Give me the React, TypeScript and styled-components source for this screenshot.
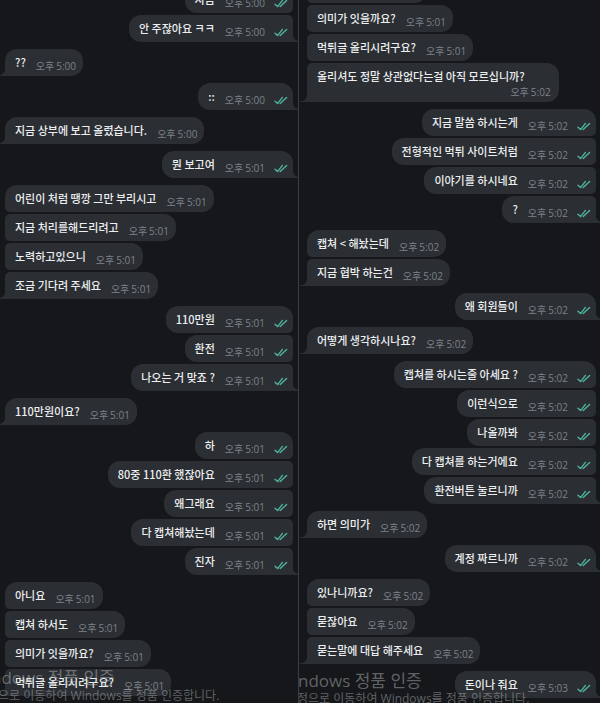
import React from 'react';
import styled, { createGlobalStyle } from 'styled-components';

type Msg = { text: string; time: string; stacked?: boolean };
type Group = { out: boolean; items: Msg[] };

const m = (time: string, ...texts: string[]): Msg[] => texts.map((text) => ({ text, time }));

const leftChat: Group[] = [
  { out: true, items: m('5:00', '지금', '안 주잖아요 ㅋㅋ') },
  { out: false, items: m('5:00', '??') },
  { out: true, items: m('5:00', '::') },
  { out: false, items: m('5:00', '지금 상부에 보고 올렸습니다.') },
  { out: true, items: m('5:01', '뭔 보고여') },
  {
    out: false,
    items: m('5:01', '어린이 처럼 땡깡 그만 부리시고', '지금 처리를해드리려고', '노력하고있으니', '조금 기다려 주세요'),
  },
  { out: true, items: m('5:01', '110만원', '환전', '나오는 거 맞죠 ?') },
  { out: false, items: m('5:01', '110만원이요?') },
  { out: true, items: m('5:01', '하', '80중 110환 했잖아요', '왜그래요', '다 캡쳐해놨는데', '진자') },
  { out: false, items: m('5:01', '아니요', '캡쳐 하서도', '의미가 잇을까요?', '먹튀글 올리시려구요?') },
];

const rightChat: Group[] = [
  {
    out: false,
    items: [
      ...m('5:01', '캡쳐 하서도', '의미가 잇을까요?', '먹튀글 올리시려구요?'),
      { text: '올리셔도 정말 상관없다는걸 아직 모르십니까?', time: '5:02', stacked: true },
    ],
  },
  { out: true, items: m('5:02', '지금 말씀 하시는게', '전형적인 먹튀 사이트처럼', '이야기를 하시네요', '?') },
  { out: false, items: m('5:02', '캡쳐 < 해놨는데', '지금 협박 하는건') },
  { out: true, items: m('5:02', '왜 회원들이') },
  { out: false, items: m('5:02', '어떻게 생각하시나요?') },
  {
    out: true,
    items: m('5:02', '캡쳐를 하시는줄 아세요 ?', '이런식으로', '나올까봐', '다 캡쳐를 하는거에요', '환전버튼 눌르니까'),
  },
  { out: false, items: m('5:02', '하면 의미가') },
  { out: true, items: m('5:02', '계정 짜르니까') },
  { out: false, items: m('5:02', '있나니까요?', '묻잖아요', '묻는말에 대답 해주세요') },
  { out: true, items: m('5:03', '돈이나 줘요') },
];

const BG = '#15171a';
const BUBBLE = '#2b2e33';

const GlobalStyle = createGlobalStyle`
  html, body {
    margin: 0;
    padding: 0;
    background: ${BG};
  }
  #root {
    height: 703px;
  }
`;

const Screen = styled.div`
  display: grid;
  grid-template-columns: 298px 1px 1fr;
  width: 600px;
  height: 703px;
  overflow: hidden;
  background: ${BG};
  font-family: 'Open Sans', 'Noto Sans CJK KR', sans-serif;
`;

const Divider = styled.div`
  background: #3a3d43;
`;

const Column = styled.div<{ $padL: number; $padR: number }>`
  position: relative;
  overflow: hidden;
  padding: 0 ${(p) => p.$padR}px 0 ${(p) => p.$padL}px;
`;

const List = styled.div<{ $shift: number }>`
  display: flex;
  flex-direction: column;
  gap: 7px;
  margin-top: ${(p) => -p.$shift}px;
`;

const GroupBox = styled.div<{ $out: boolean }>`
  display: flex;
  flex-direction: column;
  align-items: ${(p) => (p.$out ? 'flex-end' : 'flex-start')};
  gap: 2px;
`;

const Bubble = styled.div<{ $out: boolean; $first: boolean; $last: boolean; $stacked: boolean }>`
  position: relative;
  box-sizing: border-box;
  min-height: 27px;
  display: flex;
  flex-direction: ${(p) => (p.$stacked ? 'column' : 'row')};
  align-items: flex-end;
  padding: ${(p) => (p.$stacked ? '6px 8px 4px 10px' : `0 ${p.$out ? 5 : 7}px 4px 10px`)};
  background: ${BUBBLE};
  border-radius: ${(p) =>
    p.$out
      ? `12px ${p.$first ? 12 : 5}px ${p.$last ? 0 : 5}px 12px`
      : `${p.$first ? 12 : 5}px 12px 12px ${p.$last ? 0 : 5}px`};

  &::before {
    content: '';
    display: ${(p) => (p.$last ? 'block' : 'none')};
    position: absolute;
    bottom: 0;
    width: 7px;
    height: 8px;
    ${(p) =>
      p.$out
        ? `right: -7px; background: radial-gradient(circle at 100% 0, transparent 7px, ${BUBBLE} 7.6px);`
        : `left: -7px; background: radial-gradient(circle at 0 0, transparent 7px, ${BUBBLE} 7.6px);`}
  }
`;

const Text = styled.span<{ $stacked: boolean }>`
  align-self: ${(p) => (p.$stacked ? 'flex-start' : 'auto')};
  color: #eceef0;
  font-family: 'Noto Sans CJK KR', 'Open Sans', sans-serif;
  font-size: 11px;
  font-weight: 500;
  line-height: 15px;
  margin-bottom: 2px;
  margin-right: ${(p) => (p.$stacked ? 26 : 0)}px;
  white-space: nowrap;
`;

const Meta = styled.span<{ $stacked: boolean }>`
  display: flex;
  align-items: center;
  gap: 9px;
  margin-left: ${(p) => (p.$stacked ? 0 : 10)}px;
  color: #7d8289;
  font-size: 10px;
  line-height: 12px;
  white-space: nowrap;
`;

const Ampm = styled.span`
  font-family: 'Noto Sans CJK KR', sans-serif;
  margin-right: 2px;
`;

const Watermark = styled.div<{ $left: number; $bottom: number }>`
  position: absolute;
  left: ${(p) => p.$left}px;
  bottom: ${(p) => p.$bottom}px;
  color: rgba(205, 208, 212, 0.42);
  font-family: 'Open Sans', 'Noto Sans CJK KR', sans-serif;
  white-space: nowrap;
  pointer-events: none;
`;

const WmTitle = styled.div`
  font-size: 17px;
  line-height: 20px;
`;

const WmSub = styled.div<{ $indent: number }>`
  font-size: 12px;
  line-height: 15px;
  margin-left: ${(p) => p.$indent}px;
`;

function Checks() {
  return (
    <svg width="14" height="9" viewBox="0 0 14 9" fill="none">
      <path d="M1 5.2 L3.6 7.6 L8.4 1.4" stroke="#4fb39a" strokeWidth="1.4" strokeLinecap="round" strokeLinejoin="round" />
      <path d="M6.2 7.6 L12.6 1.4" stroke="#4fb39a" strokeWidth="1.4" strokeLinecap="round" />
    </svg>
  );
}

function Chat({ groups }: { groups: Group[] }) {
  return (
    <>
      {groups.map((g, gi) => (
        <GroupBox key={gi} $out={g.out}>
          {g.items.map((msg, i) => {
            const stacked = !!msg.stacked;
            return (
              <Bubble key={i} $out={g.out} $first={i === 0} $last={i === g.items.length - 1} $stacked={stacked}>
                <Text $stacked={stacked}>{msg.text}</Text>
                <Meta $stacked={stacked}>
                  <span>
                    <Ampm>오후</Ampm>
                    {msg.time}
                  </span>
                  {g.out && <Checks />}
                </Meta>
              </Bubble>
            );
          })}
        </GroupBox>
      ))}
    </>
  );
}

export default function App() {
  return (
    <>
      <GlobalStyle />
      <Screen>
        <Column $padL={5} $padR={5}>
          <List $shift={14}>
            <Chat groups={leftChat} />
          </List>
          <Watermark $left={-29} $bottom={0}>
            <WmTitle>Windows 정품 인증</WmTitle>
            <WmSub $indent={5}>설정으로 이동하여 Windows를 정품 인증합니다.</WmSub>
          </Watermark>
        </Column>
        <Divider />
        <Column $padL={8} $padR={4}>
          <List $shift={24}>
            <Chat groups={rightChat} />
          </List>
          <Watermark $left={-21} $bottom={-3}>
            <WmTitle>Windows 정품 인증</WmTitle>
            <WmSub $indent={8}>설정으로 이동하여 Windows를 정품 인증합니다.</WmSub>
          </Watermark>
        </Column>
      </Screen>
    </>
  );
}
